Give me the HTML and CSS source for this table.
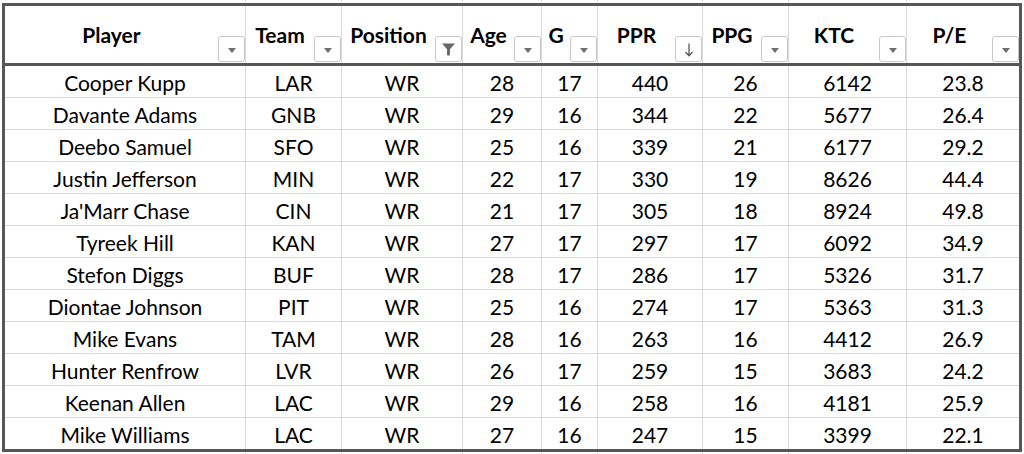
FILE: index.html
```html
<!DOCTYPE html>
<html>
<head>
<meta charset="utf-8">
<link rel="stylesheet" href="styles.css">
</head>
<body>
<div class="sheet">
  <div class="strip top">
    <span></span><span></span><span></span><span></span><span></span><span></span><span></span><span></span><span></span>
  </div>
  <div class="table">
    <div class="head">
      <div class="hcell"><span class="label">Player</span><span class="btn"><i class="tri"></i></span></div>
      <div class="hcell"><span class="label">Team</span><span class="btn"><i class="tri"></i></span></div>
      <div class="hcell"><span class="label">Position</span><span class="btn"><svg class="funnel" width="13" height="13" viewBox="0 0 12 12"><path d="M0 0.5H12L7.3 5.8V11.5H4.7V5.8Z" fill="#666"/></svg></span></div>
      <div class="hcell"><span class="label">Age</span><span class="btn"><i class="tri"></i></span></div>
      <div class="hcell"><span class="label">G</span><span class="btn"><i class="tri"></i></span></div>
      <div class="hcell"><span class="label">PPR</span><span class="btn"><svg class="arrow" width="10" height="14" viewBox="0 0 10 14"><path d="M5 0.5V12.5M1.5 9L5 12.8L8.5 9" fill="none" stroke="#5a5a5a" stroke-width="1.3"/></svg></span></div>
      <div class="hcell"><span class="label">PPG</span><span class="btn"><i class="tri"></i></span></div>
      <div class="hcell"><span class="label">KTC</span><span class="btn"><i class="tri"></i></span></div>
      <div class="hcell"><span class="label">P/E</span><span class="btn"><i class="tri"></i></span></div>
    </div>
    <div class="body">
      <div>Cooper Kupp</div><div>LAR</div><div>WR</div><div>28</div><div>17</div><div>440</div><div>26</div><div>6142</div><div>23.8</div>
      <div>Davante Adams</div><div>GNB</div><div>WR</div><div>29</div><div>16</div><div>344</div><div>22</div><div>5677</div><div>26.4</div>
      <div>Deebo Samuel</div><div>SFO</div><div>WR</div><div>25</div><div>16</div><div>339</div><div>21</div><div>6177</div><div>29.2</div>
      <div>Justin Jefferson</div><div>MIN</div><div>WR</div><div>22</div><div>17</div><div>330</div><div>19</div><div>8626</div><div>44.4</div>
      <div>Ja'Marr Chase</div><div>CIN</div><div>WR</div><div>21</div><div>17</div><div>305</div><div>18</div><div>8924</div><div>49.8</div>
      <div>Tyreek Hill</div><div>KAN</div><div>WR</div><div>27</div><div>17</div><div>297</div><div>17</div><div>6092</div><div>34.9</div>
      <div>Stefon Diggs</div><div>BUF</div><div>WR</div><div>28</div><div>17</div><div>286</div><div>17</div><div>5326</div><div>31.7</div>
      <div>Diontae Johnson</div><div>PIT</div><div>WR</div><div>25</div><div>16</div><div>274</div><div>17</div><div>5363</div><div>31.3</div>
      <div>Mike Evans</div><div>TAM</div><div>WR</div><div>28</div><div>16</div><div>263</div><div>16</div><div>4412</div><div>26.9</div>
      <div>Hunter Renfrow</div><div>LVR</div><div>WR</div><div>26</div><div>17</div><div>259</div><div>15</div><div>3683</div><div>24.2</div>
      <div>Keenan Allen</div><div>LAC</div><div>WR</div><div>29</div><div>16</div><div>258</div><div>16</div><div>4181</div><div>25.9</div>
      <div>Mike Williams</div><div>LAC</div><div>WR</div><div>27</div><div>16</div><div>247</div><div>15</div><div>3399</div><div>22.1</div>
    </div>
  </div>
  <div class="strip bottom">
    <span></span><span></span><span></span><span></span><span></span><span></span><span></span><span></span><span></span>
  </div>
</div>
</body>
</html>
```
FILE: styles.css
```css
html, body {
  margin: 0;
  padding: 0;
  background: #ffffff;
}

body {
  font-family: Lato, "Liberation Sans", sans-serif;
  color: #000;
  width: 1024px;
  height: 454px;
  overflow: hidden;
}

.sheet {
  display: flex;
  flex-direction: column;
  padding-left: 2px;
}

.strip {
  display: grid;
  grid-template-columns: 240px 95px 120px 78px 55px 104px 85px 117px 112px;
  column-gap: 1px;
  background: #dedede;
  margin-left: 3px;
  width: 1014px;
}
.strip span { background: #fff; }
.strip.top { height: 3px; }
.strip.bottom { height: 3px; }

.table {
  width: 1014px;
  border: 3px solid #575757;
  display: flex;
  flex-direction: column;
}

.head {
  display: grid;
  grid-template-columns: 240px 95px 120px 78px 55px 104px 85px 117px 112px;
  column-gap: 1px;
  background: #d9d9d9;
  border-bottom: 3px solid #575757;
  height: 57px;
}

.hcell {
  background: #fff;
  display: flex;
  align-items: flex-start;
}

.label {
  flex: 1;
  text-align: center;
  font-weight: 700;
  font-size: 21px;
  line-height: 24px;
  padding-top: 17px;
  white-space: nowrap;
}

.btn {
  align-self: flex-end;
  margin-bottom: 1px;
  width: 25px;
  height: 24px;
  border: 1px solid #c9c9c9;
  border-radius: 3px;
  background: #fff;
  display: flex;
  align-items: center;
  justify-content: center;
  box-sizing: content-box;
}

.tri {
  width: 0;
  height: 0;
  border-left: 4px solid transparent;
  border-right: 4px solid transparent;
  border-top: 5px solid #6e6e6e;
  margin-top: 2px;
}

.funnel { margin-top: 1px; }
.arrow { margin-top: 1px; }

.body {
  display: grid;
  grid-template-columns: 240px 95px 120px 78px 55px 104px 85px 117px 112px;
  grid-auto-rows: 31px;
  gap: 1px;
  background: #d9d9d9;
}

.body div {
  background: #fff;
  text-align: center;
  font-size: 21px;
  line-height: 29px;
  padding-top: 2px;
  white-space: nowrap;
}
```
